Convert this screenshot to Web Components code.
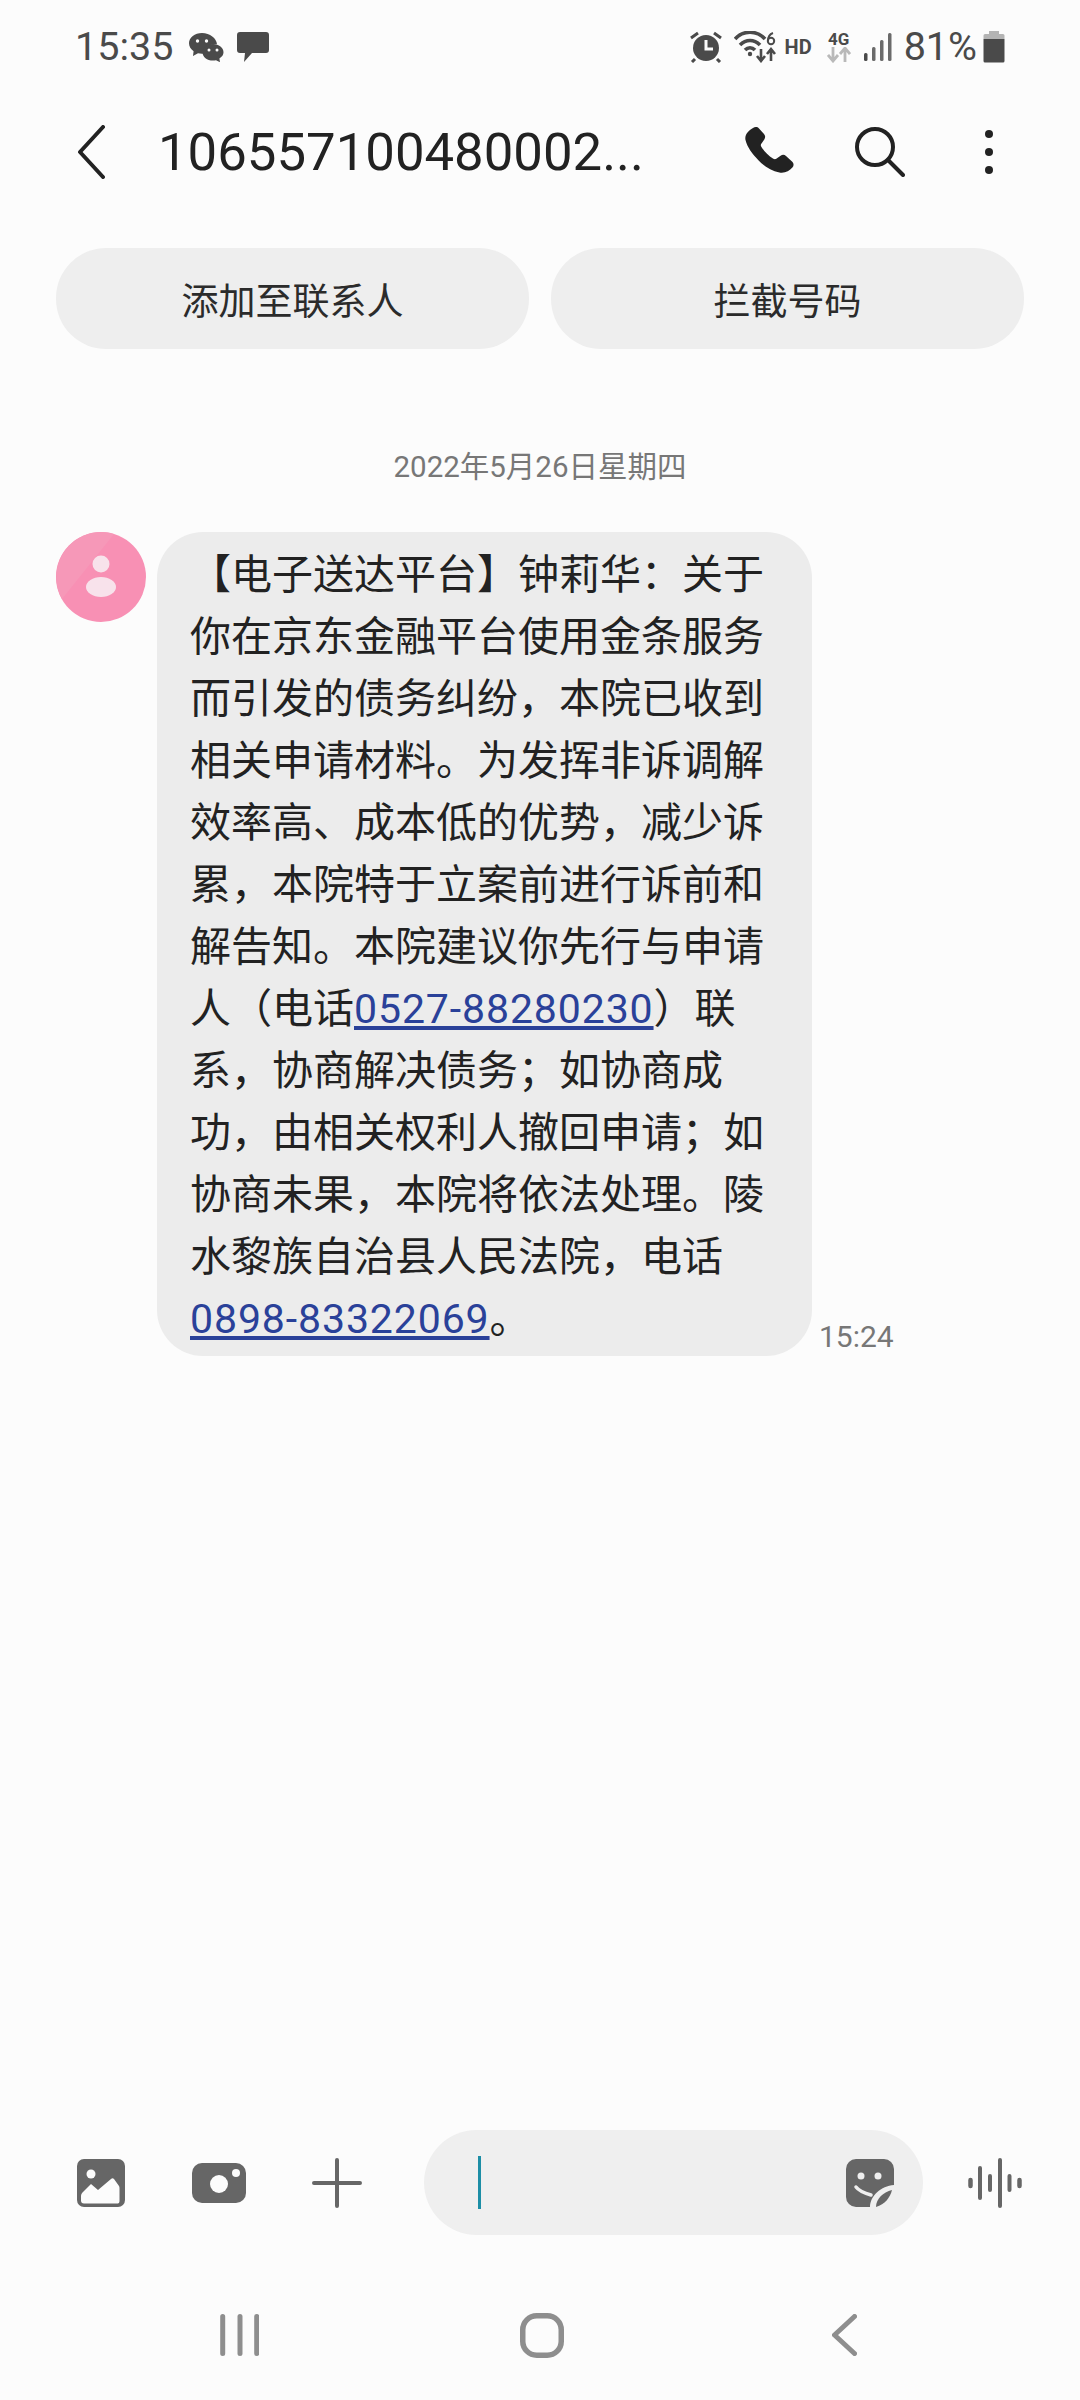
<!DOCTYPE html>
<html lang="zh">
<head>
<meta charset="utf-8">
<title>Messages</title>
<style>
  html, body { margin: 0; padding: 0; background: #fcfcfc; }
  body { font-family: Roboto, "Noto Sans CJK SC", sans-serif; }
  #screen { display: flex; flex-direction: column; width: 1080px; height: 2400px; overflow: hidden; }
</style>
</head>
<body>
<div id="screen">
  <status-bar></status-bar>
  <convo-header number="106557100480002..."></convo-header>
  <action-row>
    <action-pill>添加至联系人</action-pill>
    <action-pill>拦截号码</action-pill>
  </action-row>
  <date-divider>2022年5月26日星期四</date-divider>
  <message-row time="15:24">【电子送达平台】钟莉华：关于<br>你在京东金融平台使用金条服务<br>而引发的债务纠纷，本院已收到<br>相关申请材料。为发挥非诉调解<br>效率高、成本低的优势，减少诉<br>累，本院特于立案前进行诉前和<br>解告知。本院建议你先行与申请<br>人（电话<a href="#">0527-88280230</a>）联<br>系，协商解决债务；如协商成<br>功，由相关权利人撤回申请；如<br>协商未果，本院将依法处理。陵<br>水黎族自治县人民法院，电话<br><a href="#">0898-83322069</a>。</message-row>
  <composer-bar></composer-bar>
  <nav-bar></nav-bar>
</div>

<script>
/* STATUS BAR */
class StatusBar extends HTMLElement {
    constructor() {
        super();
        this.attachShadow({mode: 'open'});
    }
    connectedCallback() {
        this.shadowRoot.innerHTML = `
        <style>
            :host { display: flex; justify-content: space-between; align-items: center; height: 92px; padding: 2px 75px 0 75px; box-sizing: border-box; color: #4a4a4a; }
            .side { display: flex; align-items: center; }
            .clock, .pct { font: 400 39.500px Roboto, sans-serif; line-height: 46px; }
            svg { display: block; fill: #4a4a4a; }
            .hd { font: 700 20px Roboto, sans-serif; margin: 0 15px 0 7px; }
            .net { display: flex; flex-direction: column; align-items: center; margin-right: 12px; }
            .net b { font: 700 17px/15px Roboto, sans-serif; }
        </style>
        <div class="side">
            <span class="clock">15:35</span>
            <svg style="margin-left:15px" width="36" height="30" viewBox="0 0 36 30">
                <path d="M14 1C6.800 1 1 5.600 1 11.300c0 3.200 1.800 6 4.600 7.900L5 24l5-2.700c1.300.3 2.600.5 4 .5s2-.3 3-.5c-1-6 5-10 12-9 -.5-6-7-11.300-15-11.300z"/>
                <circle cx="9.500" cy="9" r="1.700" fill="#fcfcfc"/><circle cx="18.500" cy="9" r="1.700" fill="#fcfcfc"/>
                <path d="M25 12c-6 0-10.500 3.700-10.500 8.300s4.500 8.300 10.500 8.300c1 0 2-.1 3-.4l4 2-.6-3.800c2.700-1.500 4.100-3.600 4.100-6.100 0-4.600-4.500-8.300-10.500-8.300z"/>
                <circle cx="21" cy="18" r="1.500" fill="#fcfcfc"/><circle cx="29" cy="18" r="1.500" fill="#fcfcfc"/>
            </svg>
            <svg style="margin-left:13px" width="32" height="32" viewBox="0 0 32 32">
                <path d="M3 1h26a3 3 0 0 1 3 3v15a3 3 0 0 1-3 3H15l-8 9 1-9H3a3 3 0 0 1-3-3V4a3 3 0 0 1 3-3z"/>
            </svg>
        </div>
        <div class="side">
            <svg style="margin-right:2px" width="34" height="32" viewBox="0 0 34 32">
                <circle cx="17" cy="17" r="13"/>
                <path d="M17 9v9h7" fill="none" stroke="#fcfcfc" stroke-width="3"/>
                <path d="M2 7l7-5M32 7l-7-5M6 28l-3 3M28 28l3 3" stroke="#4a4a4a" stroke-width="3" fill="none"/>
            </svg>
            <svg style="margin-left:9px" width="44" height="32" viewBox="0 0 44 32">
                <path d="M1 8C9-1 23-1 31 8M6 14c6-6 14-6 20 0M11 19c3-3 7-3 10 0" fill="none" stroke="#4a4a4a" stroke-width="3.600"/>
                <circle cx="16" cy="23" r="2.200"/>
                <path d="M27 18v10M23 25l4 5 4-5" fill="none" stroke="#4a4a4a" stroke-width="2.600"/>
                <path d="M37 30V19M33 23l4-5 4 5" fill="none" stroke="#4a4a4a" stroke-width="2.600"/>
                <circle cx="37" cy="10" r="3.200" fill="none" stroke="#4a4a4a" stroke-width="2"/>
                <path d="M34 10c0-4 2-7 5-8" fill="none" stroke="#4a4a4a" stroke-width="2"/>
            </svg>
            <span class="hd">HD</span>
            <div class="net">
                <b>4G</b>
                <svg width="24" height="16" viewBox="0 0 24 16">
                    <path d="M6 0v13M1 8l5 6 5-6M18 15V2M13 7l5-6 5 6" fill="none" stroke="#b9b9b9" stroke-width="2.800"/>
                </svg>
            </div>
            <svg width="30" height="30" viewBox="0 0 30 30">
                <rect x="1" y="21" width="3.500" height="8" rx="1.500"/><rect x="9" y="15" width="3.500" height="14" rx="1.500" fill="#6a6a6a"/>
                <rect x="17" y="8" width="3.500" height="21" rx="1.500" fill="#6a6a6a"/><rect x="25" y="1" width="3.500" height="28" rx="1.500" fill="#6a6a6a"/>
            </svg>
            <span class="pct" style="margin-left:11px">81%</span>
            <svg style="margin-left:6px" width="22" height="32" viewBox="0 0 22 32">
                <path d="M6 0h10v3H6z" fill="#b4b4b4"/>
                <path d="M2 3h18a1.500 1.500 0 0 1 1.500 1.500V8H.5V4.500A1.500 1.500 0 0 1 2 3z" fill="#b4b4b4"/>
                <path d="M.5 8h21v22a1.500 1.500 0 0 1-1.500 1.500H2A1.500 1.500 0 0 1 .5 30z"/>
            </svg>
        </div>
        `;
    }
}
customElements.define('status-bar', StatusBar);

/* CONVERSATION HEADER */
class ConvoHeader extends HTMLElement {
    constructor() {
        super();
        this.attachShadow({mode: 'open'});
    }
    connectedCallback() {
        this.shadowRoot.innerHTML = `
        <style>
            :host { display: flex; align-items: center; height: 120px; padding-left: 76px; box-sizing: border-box; color: #222; }
            .title { font: 400 52.700px Roboto, sans-serif; margin-left: 52px; width: 484px; white-space: nowrap; }
            svg { display: block; }
        </style>
        <svg width="30" height="54" viewBox="0 0 30 54">
            <path d="M27 2L4 27l23 25" fill="none" stroke="#222" stroke-width="4" stroke-linecap="round" stroke-linejoin="round"/>
        </svg>
        <span class="title">${this.getAttribute('number')}</span>
        <svg style="margin-left:103px" width="50" height="50" viewBox="0 0 50 50">
            <path d="M8 1c2-1.400 4.500-1.200 6 .5l5 5.500c1.500 1.700 1.500 3.700.3 5.500l-3 4.200c-.7 1-.6 2 0 3 3 5 7 9 12 12 1 .6 2 .7 3 0l4.300-3c1.800-1.200 3.800-1.200 5.400.3l6 5.500c2 1.800 2 4.300.4 6-3 3.600-7.800 6-13 5-8-1.600-15-6-21-12.300C7.500 27 2 20 .5 13 -.6 8 3 4 8 1z" fill="#222"/>
        </svg>
        <svg style="margin-left:60px" width="50" height="50" viewBox="0 0 50 50">
            <circle cx="20" cy="20" r="18" fill="none" stroke="#222" stroke-width="4"/>
            <path d="M33 33l15 15" stroke="#222" stroke-width="4" stroke-linecap="round"/>
        </svg>
        <svg style="margin-left:80px" width="8" height="44" viewBox="0 0 8 44">
            <circle cx="4" cy="4" r="4" fill="#222"/><circle cx="4" cy="22" r="4" fill="#222"/><circle cx="4" cy="40" r="4" fill="#222"/>
        </svg>
        `;
    }
}
customElements.define('convo-header', ConvoHeader);

/* ACTION BUTTONS */
class ActionRow extends HTMLElement {
    constructor() {
        super();
        this.attachShadow({mode: 'open'});
        this.shadowRoot.innerHTML = `
        <style>
            :host { display: flex; gap: 22px; margin-top: 36px; padding: 0 56px; }
        </style>
        <slot></slot>
        `;
    }
}
customElements.define('action-row', ActionRow);

class ActionPill extends HTMLElement {
    constructor() {
        super();
        this.attachShadow({mode: 'open'});
        this.shadowRoot.innerHTML = `
        <style>
            :host { display: flex; flex: 1; align-items: center; justify-content: center; height: 101px; border-radius: 50px; background: #eeeeee; color: #2b2b2b; font: 400 37px "Noto Sans CJK SC", sans-serif; }
        </style>
        <slot></slot>
        `;
    }
}
customElements.define('action-pill', ActionPill);

/* DATE */
class DateDivider extends HTMLElement {
    constructor() {
        super();
        this.attachShadow({mode: 'open'});
        this.shadowRoot.innerHTML = `
        <style>
            :host { display: block; margin-top: 97px; height: 42px; text-align: center; color: #777; font: 400 29.500px/42px Roboto, "Noto Sans CJK SC", sans-serif; }
        </style>
        <slot></slot>
        `;
    }
}
customElements.define('date-divider', DateDivider);

/* MESSAGE */
class MessageRow extends HTMLElement {
    constructor() {
        super();
        this.attachShadow({mode: 'open'});
    }
    connectedCallback() {
        this.shadowRoot.innerHTML = `
        <style>
            :host { display: flex; align-items: flex-start; margin-top: 44px; padding-left: 56px; }
            .avatar { display: block; flex: none; margin-right: 11px; }
            .bubble { box-sizing: border-box; width: 655px; height: 824px; padding: 12px 30px 0 33px; border-radius: 46px; background: #ececec; color: #222; font: 400 41px/62px Roboto, "Noto Sans CJK SC", sans-serif; white-space: nowrap; }
            ::slotted(a) { color: #2a4199; text-decoration: underline; letter-spacing: .9px; }
            .time { align-self: flex-end; margin: 0 0 -1px 7px; color: #777; font: 400 30px/40px Roboto, sans-serif; }
        </style>
        <svg class="avatar" width="90" height="90" viewBox="0 0 90 90">
            <circle cx="45" cy="45" r="45" fill="#f890b4"/>
            <path d="M45 0a45 45 0 0 0-39 67L58 2a45 45 0 0 0-13-2z" fill="#f698b8"/>
            <circle cx="45" cy="32" r="8.500" fill="#f8e2eb"/>
            <ellipse cx="45" cy="55" rx="15" ry="10" fill="#f8e2eb"/>
        </svg>
        <div class="bubble"><slot></slot></div>
        <span class="time">${this.getAttribute('time')}</span>
        `;
    }
}
customElements.define('message-row', MessageRow);

/* COMPOSER */
class ComposerBar extends HTMLElement {
    constructor() {
        super();
        this.attachShadow({mode: 'open'});
    }
    connectedCallback() {
        this.shadowRoot.innerHTML = `
        <style>
            :host { display: flex; align-items: center; margin-top: auto; padding-left: 77px; height: 105px; }
            svg { display: block; flex: none; }
            .field { display: flex; align-items: center; justify-content: space-between; box-sizing: border-box; width: 499px; height: 105px; margin-left: 62px; padding: 0 29px 0 54px; border-radius: 53px; background: #efefef; }
            .caret { width: 3px; height: 53px; background: #1c8ea6; }
        </style>
        <svg width="48" height="48" viewBox="0 0 48 48">
            <rect width="48" height="48" rx="7" fill="#666"/>
            <circle cx="14" cy="15" r="4.500" fill="#fcfcfc"/>
            <path d="M4 37c0-2 1-3 2-4l8-8 7 6 13-11c1-1 2-1 3 0l5 7c.500 1 .500 1.500.500 3v12c0 2-1 2.500-2.500 2.500H7c-2 0-3-1-3-3z" fill="#fcfcfc"/>
        </svg>
        <svg style="margin-left:67px" width="54" height="40" viewBox="0 0 54 40">
            <rect width="54" height="40" rx="10" fill="#666"/>
            <circle cx="27" cy="21" r="9" fill="#fcfcfc"/>
            <circle cx="44" cy="10" r="4" fill="#fcfcfc"/>
        </svg>
        <svg style="margin-left:66px" width="50" height="50" viewBox="0 0 50 50">
            <path d="M25 2v46M2 25h46" stroke="#666" stroke-width="4" stroke-linecap="round"/>
        </svg>
        <div class="field">
            <div class="caret"></div>
            <svg width="48" height="48" viewBox="0 0 48 48">
                <path d="M10 0h28a10 10 0 0 1 10 10v16c-13 1-24 11-24 22H10A10 10 0 0 1 0 38V10A10 10 0 0 1 10 0z" fill="#666"/>
                <path d="M30 48c0-8 7-15 16-17-2 8-7 14-16 17z" fill="#666"/>
                <circle cx="15" cy="17" r="3.500" fill="#efefef"/><circle cx="32" cy="17" r="3.500" fill="#efefef"/>
                <path d="M10 28c3 4 8 6 15 8" fill="none" stroke="#efefef" stroke-width="3.500" stroke-linecap="round"/>
            </svg>
        </div>
        <svg style="margin-left:45px" width="54" height="50" viewBox="0 0 54 50">
            <g stroke="#666" stroke-linecap="round">
                <path d="M2.500 22v6M51.500 22v6" stroke-width="4.500"/>
                <path d="M12 10v30M22 18v14M32 2v46M41.500 18v14" stroke-width="4"/>
            </g>
        </svg>
        `;
    }
}
customElements.define('composer-bar', ComposerBar);

/* NAVIGATION BAR */
class NavBar extends HTMLElement {
    constructor() {
        super();
        this.attachShadow({mode: 'open'});
    }
    connectedCallback() {
        this.shadowRoot.innerHTML = `
        <style>
            :host { display: flex; align-items: center; height: 165px; padding: 35px 0 0 220px; box-sizing: border-box; }
            svg { display: block; flex: none; }
        </style>
        <svg width="39" height="42" viewBox="0 0 39 42">
            <path d="M2.700 2.500v37M20 2.500v37M36.700 2.500v37" stroke="#8e8e8e" stroke-width="5" stroke-linecap="round"/>
        </svg>
        <svg style="margin-left:261px" width="44" height="45" viewBox="0 0 44 45">
            <rect x="2.750" y="2.750" width="38.500" height="39.500" rx="14" fill="none" stroke="#8e8e8e" stroke-width="5.500"/>
        </svg>
        <svg style="margin-left:268px" width="25" height="42" viewBox="0 0 25 42">
            <path d="M22.500 2.500L2.500 21l20 18.500" fill="none" stroke="#8e8e8e" stroke-width="5" stroke-linecap="round" stroke-linejoin="round"/>
        </svg>
        `;
    }
}
customElements.define('nav-bar', NavBar);
</script>
</body>
</html>
